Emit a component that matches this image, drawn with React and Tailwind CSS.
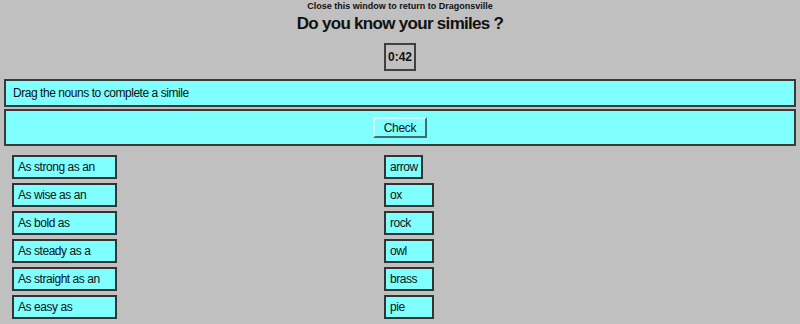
const similes = ['As strong as an', 'As wise as an', 'As bold as', 'As steady as a', 'As straight as an', 'As easy as']
const nouns = ['arrow', 'ox', 'rock', 'owl', 'brass', 'pie']

export default function App() {
  return (
    <div className="min-h-screen bg-[#c0c0c0] font-['Liberation_Sans',Arial,sans-serif] text-[#111]">
      <div className="pt-[1px] text-center text-[9px] font-bold leading-[10px]">
        Close this window to return to Dragonsville
      </div>
      <h1 className="mt-[3px] text-center text-[17px] font-bold leading-[20px] tracking-[-0.7px]">
        Do you know your similes ?
      </h1>
      <div className="mt-[9px] flex justify-center">
        <div className="flex h-[28px] w-[32px] items-center justify-center border-2 border-[#404040] text-[12px] font-bold">
          0:42
        </div>
      </div>

      <div className="mx-[4px] mt-[8px] flex flex-col gap-[2px]">
        <div className="flex h-[28px] items-center border-2 border-[#3a3a3a] bg-[#80ffff] pl-[7px] text-[12px] tracking-[-0.45px]">
          Drag the nouns to complete a simile
        </div>
        <div className="flex h-[37px] items-center justify-center border-2 border-[#3a3a3a] bg-[#80ffff]">
          <button className="h-[21px] w-[54px] border-2 border-t-[#d8ffff] border-l-[#d8ffff] border-b-[#3f6f6f] border-r-[#3f6f6f] bg-[#80ffff] text-[12px] tracking-[-0.3px]">
            Check
          </button>
        </div>
      </div>

      <div className="mt-[9px] flex">
        <div className="ml-[12px] flex flex-col gap-[4px]">
          {similes.map((s) => (
            <div
              key={s}
              className="flex h-[24px] w-[105px] items-center border-2 border-[#333] bg-[#80ffff] pl-[4px] text-[12px] tracking-[-0.45px]"
            >
              {s}
            </div>
          ))}
        </div>
        <div className="ml-[267px] flex flex-col gap-[4px]">
          {nouns.map((n) => (
            <div
              key={n}
              className={`flex h-[24px] items-center border-2 border-[#333] bg-[#80ffff] pl-[4px] text-[12px] tracking-[-0.45px] ${n === 'arrow' ? 'w-[39px]' : 'w-[50px]'}`}
            >
              {n}
            </div>
          ))}
        </div>
      </div>
    </div>
  )
}
